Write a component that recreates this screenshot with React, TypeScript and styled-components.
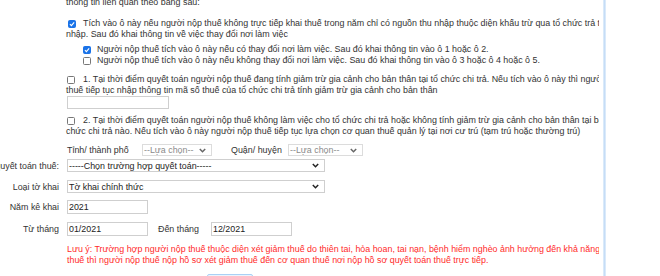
import React from "react";
import styled, { createGlobalStyle } from "styled-components";

const GlobalStyle = createGlobalStyle`
  html, body { margin: 0; padding: 0; background: #fff; }
  body {
    font-family: "Liberation Sans", Arial, sans-serif;
    font-size: 8.9px;
    color: #333;
  }
  * { box-sizing: border-box; }
`;

const Page = styled.div`
  display: flex;
  height: 276px;
  overflow: hidden;
  background: #fff;
`;

const Content = styled.div`
  flex: none;
  width: 599px;
  overflow: hidden;
`;

const Divider = styled.div`
  flex: none;
  width: 3px;
  margin-left: 4px;
  background: linear-gradient(to right, #e4f0fc, #c6ddf6, #e4f0fc);
`;

const Inner = styled.div`
  margin-top: -3px;
`;

const Block = styled.div<{ $top?: number; $indent?: number }>`
  margin-top: ${(p) => p.$top ?? 0}px;
  padding-left: ${(p) => p.$indent ?? 66}px;
`;

const Line = styled.div`
  display: flex;
  align-items: center;
  height: 11px;
  line-height: 11px;
  white-space: nowrap;
`;

const Box = styled.span<{ $checked?: boolean; $gap: number; $shift?: number }>`
  flex: none;
  display: flex;
  align-items: center;
  justify-content: center;
  width: 8px;
  height: 8px;
  margin-left: ${(p) => p.$shift ?? 0}px;
  margin-right: ${(p) => p.$gap}px;
  border-radius: 1.5px;
  border: 1px solid ${(p) => (p.$checked ? "#1a73e8" : "#777")};
  background: ${(p) => (p.$checked ? "#1a73e8" : "#fff")};
`;

const Check = ({ checked, gap, shift }: { checked?: boolean; gap: number; shift?: number }) => (
  <Box $checked={checked} $gap={gap} $shift={shift}>
    {checked && (
      <svg width="6" height="6" viewBox="0 0 10 10">
        <path d="M1.5 5.2 L4 7.6 L8.6 2.4" fill="none" stroke="#fff" strokeWidth="1.9" />
      </svg>
    )}
  </Box>
);

const TextField = styled.input<{ $w: number; $h?: number; $ml?: number }>`
  display: block;
  width: ${(p) => p.$w}px;
  height: ${(p) => p.$h ?? 14}px;
  margin: 0 0 0 ${(p) => p.$ml ?? 0}px;
  padding: 0 1px;
  border: 1px solid #cfcfcf;
  font: inherit;
  color: #222;
  background: #fff;
  outline: none;
`;

const SelectBox = styled.div<{ $w: number; $h: number; $muted?: boolean }>`
  display: flex;
  align-items: center;
  justify-content: space-between;
  width: ${(p) => p.$w}px;
  height: ${(p) => p.$h}px;
  padding: 0 5px 0 1px;
  border: 1px solid ${(p) => (p.$muted ? "#dcdcdc" : "#cfcfcf")};
  color: ${(p) => (p.$muted ? "#8a8a8a" : "#222")};
  background: #fff;
  white-space: nowrap;
  overflow: hidden;
`;

const Chevron = ({ color }: { color: string }) => (
  <svg width="7" height="5" viewBox="0 0 7 5">
    <path d="M0.8 1 L3.5 3.7 L6.2 1" fill="none" stroke={color} strokeWidth="1.5" />
  </svg>
);

const Select = ({ w, h, text, muted }: { w: number; h: number; text: string; muted?: boolean }) => (
  <SelectBox $w={w} $h={h} $muted={muted}>
    <span>{text}</span>
    <Chevron color={muted ? "#666" : "#222"} />
  </SelectBox>
);

const PlaceRow = styled.div`
  display: flex;
  align-items: center;
  margin-top: 7px;
  padding-left: 67px;
  white-space: nowrap;
`;

const InlineLabel = styled.span<{ $w: number; $ml?: number }>`
  flex: none;
  width: ${(p) => p.$w}px;
  margin-left: ${(p) => p.$ml ?? 0}px;
  color: #333;
`;

const FormRow = styled.div<{ $top: number }>`
  display: grid;
  grid-template-columns: 59px auto;
  column-gap: 8px;
  align-items: center;
  justify-content: start;
  margin-top: ${(p) => p.$top}px;
`;

const Label = styled.div`
  display: flex;
  justify-content: flex-end;
  overflow: hidden;
  white-space: nowrap;
  color: #333;
`;

const Fields = styled.div`
  display: flex;
  align-items: center;
  white-space: nowrap;
`;

const Note = styled.div`
  margin-top: 8px;
  padding-left: 67px;
  color: #ff2b2b;
  line-height: 10.5px;
  white-space: nowrap;
`;

const ButtonRow = styled.div`
  margin-top: 9px;
  padding-left: 207px;
`;

const NextButton = styled.button`
  width: 46px;
  height: 20px;
  border: 1px solid #a9d0f5;
  border-radius: 2px;
  background: #e9f3fd;
  font: inherit;
  color: #333;
`;

export default function App() {
  return (
    <>
      <GlobalStyle />
      <Page>
        <Content>
          <Inner>
            <Block>
              <Line>thông tin liên quan theo bảng sau:</Line>
            </Block>
            <Block $top={10}>
              <Line>
                <Check checked gap={7} shift={2} />
                Tích vào ô này nếu người nộp thuế không trực tiếp khai thuế trong năm chỉ có nguồn thu nhập thuộc diện khấu trừ qua tổ chức trả thu
              </Line>
              <Line>nhập. Sau đó khai thông tin về việc thay đổi nơi làm việc</Line>
            </Block>
            <Block $top={4} $indent={83}>
              <Line>
                <Check checked gap={6} />
                Người nộp thuế tích vào ô này nếu có thay đổi nơi làm việc. Sau đó khai thông tin vào ô 1 hoặc ô 2.
              </Line>
              <Line>
                <Check gap={6} />
                Người nộp thuế tích vào ô này nếu không thay đổi nơi làm việc. Sau đó khai thông tin vào ô 3 hoặc ô 4 hoặc ô 5.
              </Line>
            </Block>
            <Block $top={8}>
              <Line>
                <Check gap={8} shift={1} />
                1. Tại thời điểm quyết toán người nộp thuế đang tính giảm trừ gia cảnh cho bản thân tại tổ chức chi trả. Nếu tích vào ô này thì người nộp
              </Line>
              <Line>thuế tiếp tục nhập thông tin mã số thuế của tổ chức chi trả tính giảm trừ gia cảnh cho bản thân</Line>
              <TextField $w={102} $h={13} $ml={1} readOnly value="" />
            </Block>
            <Block $top={6}>
              <Line>
                <Check gap={8} shift={1} />
                2. Tại thời điểm quyết toán người nộp thuế không làm việc cho tổ chức chi trả hoặc không tính giảm trừ gia cảnh cho bản thân tại bất kỳ tổ
              </Line>
              <Line>chức chi trả nào. Nếu tích vào ô này người nộp thuế tiếp tục lựa chọn cơ quan thuế quản lý tại nơi cư trú (tạm trú hoặc thường trú)</Line>
            </Block>
            <PlaceRow>
              <InlineLabel $w={75}>Tỉnh/ thành phố</InlineLabel>
              <Select w={70} h={12} text="--Lựa chọn--" muted />
              <InlineLabel $w={57} $ml={19}>Quận/ huyện</InlineLabel>
              <Select w={75} h={12} text="--Lựa chọn--" muted />
            </PlaceRow>
            <FormRow $top={3}>
              <Label>Trường hợp quyết toán thuế:</Label>
              <Select w={258} h={13} text="-----Chọn trường hợp quyết toán-----" />
            </FormRow>
            <FormRow $top={8}>
              <Label>Loại tờ khai</Label>
              <Select w={258} h={13} text="Tờ khai chính thức" />
            </FormRow>
            <FormRow $top={7}>
              <Label>Năm kê khai</Label>
              <TextField $w={81} readOnly value="2021" />
            </FormRow>
            <FormRow $top={8}>
              <Label>Từ tháng</Label>
              <Fields>
                <TextField $w={81} readOnly value="01/2021" />
                <InlineLabel $w={53} $ml={10}>Đến tháng</InlineLabel>
                <TextField $w={81} readOnly value="12/2021" />
              </Fields>
            </FormRow>
            <Note>
              <div>Lưu ý: Trường hợp người nộp thuế thuộc diện xét giảm thuế do thiên tai, hỏa hoan, tai nạn, bệnh hiểm nghèo ảnh hưởng đến khả năng nộp</div>
              <div>thuế thì người nộp thuế nộp hồ sơ xét giảm thuế đến cơ quan thuế nơi nộp hồ sơ quyết toán thuế trực tiếp.</div>
            </Note>
            <ButtonRow>
              <NextButton type="button">Tiếp tục</NextButton>
            </ButtonRow>
          </Inner>
        </Content>
        <Divider />
      </Page>
    </>
  );
}
